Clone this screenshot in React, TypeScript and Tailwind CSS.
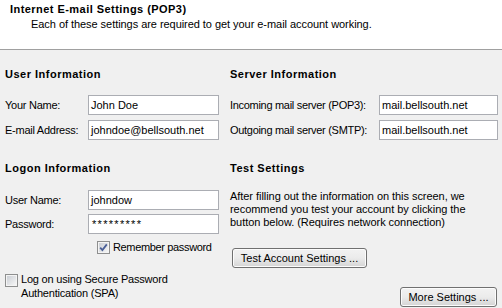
import React from "react";

const font = "font-['Liberation_Sans',Arial,sans-serif]";

function Field({ value, w, extra = "" }: { value: string; w: string; extra?: string }) {
  return (
    <div className={`${w} h-[20px] border border-[#abadb3] bg-white flex items-center pl-[2px] text-[11px] text-black leading-none ${extra}`}>
      {value}
    </div>
  );
}

function Check({ checked }: { checked: boolean }) {
  return (
    <span className="w-[13px] h-[13px] border border-[#8e8f8f] bg-white flex items-center justify-center shrink-0">
      <span className="w-[11px] h-[11px] border border-[#f4f4f4] bg-gradient-to-br from-[#cbcfd5] to-[#f6f6f6] flex items-center justify-center">
        {checked && (
          <svg width="9" height="9" viewBox="0 0 9 9">
            <path d="M1.2 4.6 L3.4 7 L7.8 1.4" stroke="#4a5f97" strokeWidth="1.8" fill="none" />
          </svg>
        )}
      </span>
    </span>
  );
}

function Button({ label, w }: { label: string; w: string }) {
  return (
    <div className={`${w} h-[20px] rounded-[3px] border border-[#707070] bg-gradient-to-b from-[#f2f2f2] via-[#ebebeb] to-[#d4d4d4] flex items-center justify-center text-[11px] text-black shadow-[inset_0_0_0_1px_#fcfcfc]`}>
      {label}
    </div>
  );
}

export default function App() {
  return (
    <div className={`${font} w-[502px] h-[308px] bg-[#f0f0f0] overflow-hidden text-[11px] text-black`}>
      <div className="h-[50px] bg-white border-b border-[#a0a0a0] pl-[10px] pt-[3px]">
        <div className="font-bold tracking-[0.45px] leading-[13px]">Internet E-mail Settings (POP3)</div>
        <div className="pl-[21px] leading-[13px] mt-[2px] tracking-[-0.05px]">
          Each of these settings are required to get your e-mail account working.
        </div>
      </div>
      <div className="flex pl-[5px]">
        <div className="w-[225px] flex flex-col">
          <div className="font-bold tracking-[0.5px] leading-[13px] mt-[18px]">User Information</div>
          <div className="flex items-center mt-[14px]">
            <div className="w-[83px] tracking-[-0.25px]">Your Name:</div>
            <Field value="John Doe" w="w-[131px]" />
          </div>
          <div className="flex items-center mt-[5px]">
            <div className="w-[83px] tracking-[-0.25px]">E-mail Address:</div>
            <Field value="johndoe@bellsouth.net" w="w-[131px]" />
          </div>
          <div className="font-bold tracking-[0.5px] leading-[13px] mt-[22px]">Logon Information</div>
          <div className="flex items-center mt-[15px]">
            <div className="w-[83px] tracking-[-0.25px]">User Name:</div>
            <Field value="johndow" w="w-[131px]" />
          </div>
          <div className="flex items-center mt-[4px]">
            <div className="w-[83px] tracking-[-0.25px]">Password:</div>
            <Field value="*********" w="w-[131px]" extra="tracking-[1.3px] pl-[3px]" />
          </div>
          <div className="flex items-center mt-[7px] pl-[92px] gap-[3px] leading-[13px] tracking-[-0.35px]">
            <Check checked />
            <span>Remember password</span>
          </div>
          <div className="flex items-start mt-[20px] gap-[3px] leading-[13.5px] tracking-[-0.2px]">
            <Check checked={false} />
            <span className="-mt-[1px]">
              Log on using Secure Password
              <br />
              Authentication (SPA)
            </span>
          </div>
        </div>
        <div className="w-[268px] flex flex-col">
          <div className="font-bold tracking-[0.5px] leading-[13px] mt-[18px]">Server Information</div>
          <div className="flex items-center mt-[14px]">
            <div className="w-[149px] tracking-[-0.3px]">Incoming mail server (POP3):</div>
            <Field value="mail.bellsouth.net" w="w-[119px]" />
          </div>
          <div className="flex items-center mt-[5px]">
            <div className="w-[149px] tracking-[-0.3px]">Outgoing mail server (SMTP):</div>
            <Field value="mail.bellsouth.net" w="w-[119px]" />
          </div>
          <div className="font-bold tracking-[0.5px] leading-[13px] mt-[22px]">Test Settings</div>
          <div className="leading-[13px] mt-[15px] tracking-[-0.05px]">
            After filling out the information on this screen, we
            <br />
            recommend you test your account by clicking the
            <br />
            button below. (Requires network connection)
          </div>
          <div className="mt-[19px] pl-[2px]">
            <Button label="Test Account Settings ..." w="w-[135px]" />
          </div>
          <div className="mt-[19px] flex justify-end pr-[1px]">
            <Button label="More Settings ..." w="w-[97px]" />
          </div>
        </div>
      </div>
    </div>
  );
}
